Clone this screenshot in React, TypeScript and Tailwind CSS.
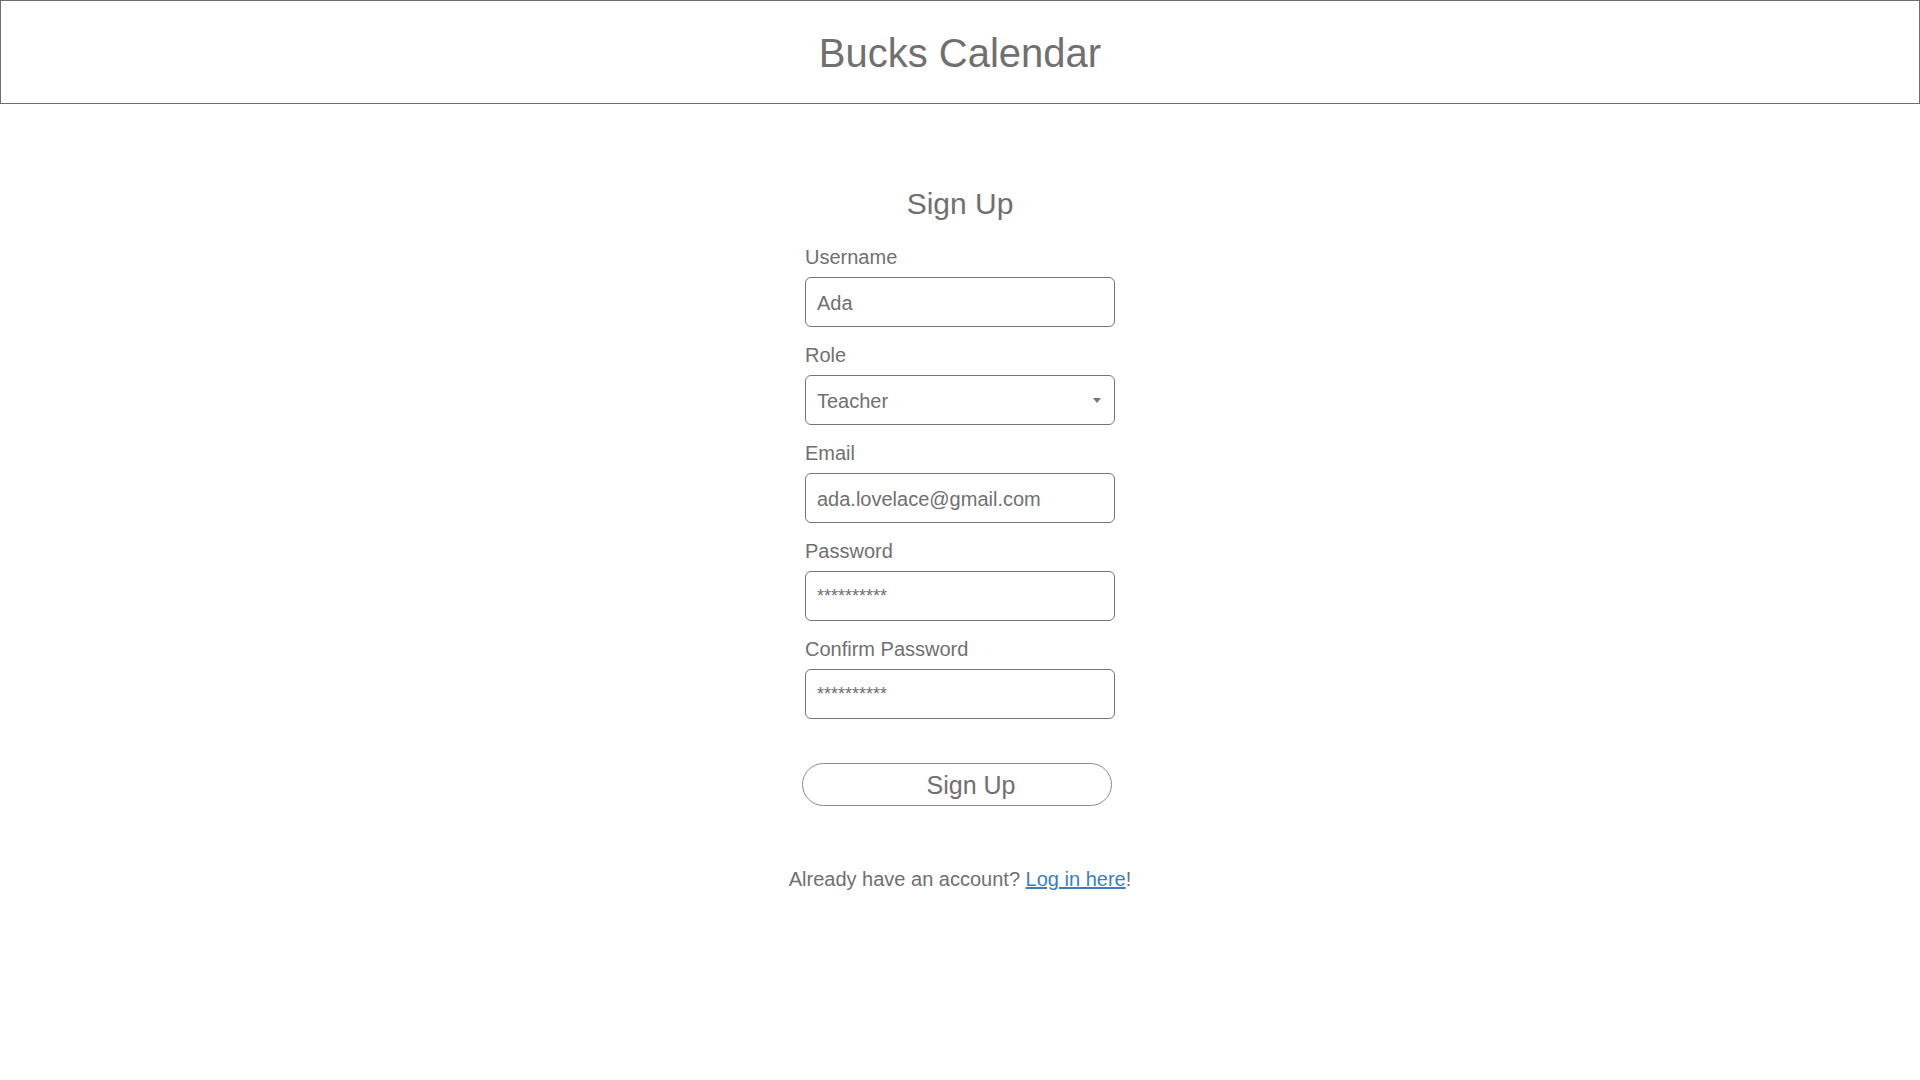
import React from "react";

const font = { fontFamily: '"Liberation Sans", Arial, Helvetica, sans-serif' };

function Field({ label, children }: { label: string; children: React.ReactNode }) {
  return (
    <div className="flex flex-col">
      <label className="text-[20px] leading-[24px] text-[#707070]">{label}</label>
      <div className="mt-[8px]">{children}</div>
    </div>
  );
}

function TextBox({ value, small }: { value: string; small?: boolean }) {
  return (
    <input
      readOnly
      value={value}
      className={
        "w-[310px] h-[50px] rounded-[6px] border border-[#757575] bg-white px-[11px] text-[#707070] outline-none " +
        (small ? "text-[18px]" : "text-[20px] pt-[2px]")
      }
      style={font}
    />
  );
}

export default function App() {
  return (
    <div className="min-h-screen bg-white" style={font}>
      <header className="h-[104px] border border-[#6e6e6e] flex items-center justify-center pt-[2px]">
        <h1 className="text-[40px] leading-[48px] text-[#707070]">Bucks Calendar</h1>
      </header>
      <main className="flex flex-col items-center pt-[82px]">
        <h2 className="text-[30px] leading-[36px] text-[#707070]">Sign Up</h2>
        <form className="mt-[23px] w-[310px] flex flex-col gap-[16px]">
          <Field label="Username">
            <TextBox value="Ada" />
          </Field>
          <Field label="Role">
            <div className="w-[310px] h-[50px] rounded-[6px] border border-[#757575] bg-white pl-[11px] pr-[13px] pt-[2px] flex items-center justify-between text-[20px] text-[#707070]">
              <span>Teacher</span>
              <svg width="8" height="5" viewBox="0 0 8 5" className="-mt-[2px]">
                <path d="M0 0 L8 0 L4 5 Z" fill="#777" />
              </svg>
            </div>
          </Field>
          <Field label="Email">
            <TextBox value="ada.lovelace@gmail.com" />
          </Field>
          <Field label="Password">
            <TextBox value="**********" small />
          </Field>
          <Field label="Confirm Password">
            <TextBox value="**********" small />
          </Field>
          <button
            type="button"
            className="mt-[28px] -ml-[3px] w-[310px] h-[43px] rounded-full border border-[#8a8a8a] bg-white pl-[28px] text-[25px] leading-[30px] text-[#707070]"
            style={font}
          >
            Sign Up
          </button>
        </form>
        <p className="mt-[61px] text-[20px] leading-[24px] text-[#707070]">
          Already have an account?{" "}
          <a href="#" className="text-[#3a7fc1] underline">
            Log in here
          </a>
          !
        </p>
      </main>
    </div>
  );
}
